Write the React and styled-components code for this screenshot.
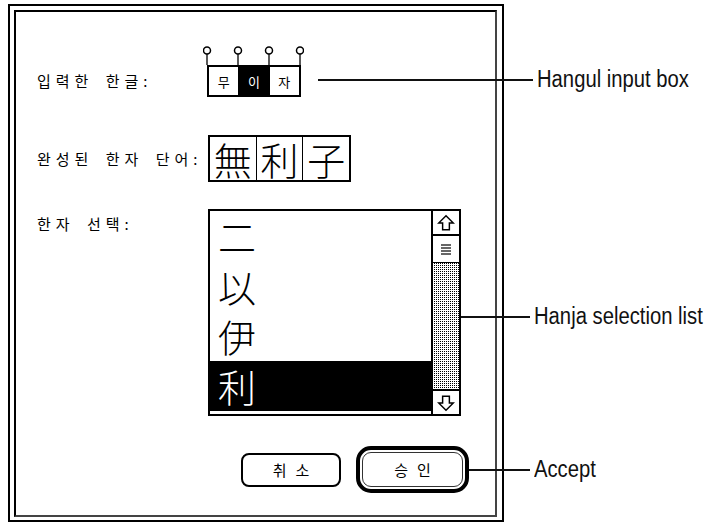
import styled, { createGlobalStyle } from 'styled-components';

const GlobalStyle = createGlobalStyle`
  body {
    margin: 0;
    background: #fff;
    font-family: "Noto Sans CJK KR", "Noto Sans", sans-serif;
    color: #000;
  }
`;

const Page = styled.div`
  width: 713px;
  height: 523px;
  padding: 4px 0 0 8px;
  box-sizing: border-box;
`;

const DialogOuter = styled.div`
  width: 496px;
  height: 518px;
  box-sizing: border-box;
  border: 2px solid #000;
  padding: 4px 5px 3px 4px;
`;

const DialogInner = styled.div`
  height: 100%;
  box-sizing: border-box;
  border: 2px solid #000;
  border-right-color: #444;
  border-bottom-color: #444;
  padding: 34px 0 0 21px;
  display: flex;
  flex-direction: column;
`;

const Row = styled.div`
  display: flex;
  align-items: ${(p) => p.$align || 'center'};
  margin-top: ${(p) => p.$top || 0}px;
`;

const Label = styled.div`
  width: 171px;
  flex: none;
  font-size: 15px;
  letter-spacing: 5px;
  word-spacing: 4px;
  white-space: nowrap;
  align-self: ${(p) => p.$self || 'auto'};
  padding-top: ${(p) => p.$pad || 0}px;
  padding-bottom: ${(p) => p.$padBottom || 0}px;
`;

const HangulBlock = styled.div`
  display: flex;
  flex-direction: column;
  margin-left: -1px;
`;

const Pins = styled.svg`
  display: block;
  margin-left: -4px;
`;

const CellRow = styled.div`
  display: flex;
  border: 2px solid #000;
  box-sizing: border-box;
  width: ${(p) => p.$w}px;
  height: ${(p) => p.$h}px;
`;

const Cell = styled.div`
  flex: 1;
  display: flex;
  align-items: center;
  justify-content: center;
  font-size: ${(p) => p.$size}px;
  line-height: 1;
  background: ${(p) => (p.$on ? '#000' : '#fff')};
  color: ${(p) => (p.$on ? '#fff' : '#000')};
  font-weight: ${(p) => p.$weight || 400};
  & + & {
    border-left: 1.5px solid #000;
  }
`;

const Callout = styled.div`
  display: flex;
  align-items: center;
  flex: none;
  margin-left: ${(p) => p.$gap || 0}px;
  margin-top: ${(p) => p.$mt || 0}px;
  margin-bottom: ${(p) => p.$mb || 0}px;
`;

const Leader = styled.div`
  width: ${(p) => p.$len}px;
  height: 2px;
  background: #111;
`;

const CalloutText = styled.span`
  display: inline-block;
  margin-left: 4px;
  font-family: "Liberation Sans Narrow", "Liberation Sans", Arial, sans-serif;
  font-size: 23px;
  white-space: nowrap;
  color: #111;
  transform: scaleX(0.88);
  transform-origin: left center;
`;

const List = styled.div`
  width: 253px;
  height: 207px;
  box-sizing: border-box;
  border: 2px solid #000;
  display: flex;
  flex: none;
`;

const Items = styled.div`
  flex: 1;
  display: flex;
  flex-direction: column;
`;

const Item = styled.div`
  height: 50px;
  padding-left: 8px;
  font-size: 38px;
  line-height: 50px;
  font-weight: 300;
  background: ${(p) => (p.$selected ? '#000' : '#fff')};
  color: ${(p) => (p.$selected ? '#fff' : '#000')};
`;

const ScrollBar = styled.div`
  width: 26px;
  flex: none;
  border-left: 2px solid #000;
  display: flex;
  flex-direction: column;
`;

const ArrowBox = styled.div`
  height: 23px;
  flex: none;
  display: flex;
  align-items: center;
  justify-content: center;
  background: #fff;
  border-top: ${(p) => (p.$top ? '2px solid #000' : 'none')};
  border-bottom: ${(p) => (p.$bottom ? '2px solid #000' : 'none')};
`;

const Thumb = styled.div`
  height: 26px;
  flex: none;
  background: #fff;
  border-bottom: 1px solid #000;
  display: flex;
  align-items: center;
  justify-content: center;
`;

const Track = styled.div`
  flex: 1;
  background: conic-gradient(#000 25%, #fff 0) 0 0 / 2px 2px;
`;

const ButtonRow = styled.div`
  display: flex;
  align-items: center;
  margin-left: 204px;
`;

const Button = styled.button`
  width: ${(p) => p.$w}px;
  height: ${(p) => p.$h}px;
  box-sizing: border-box;
  border: ${(p) => p.$border}px solid ${(p) => p.$color || '#000'};
  border-radius: ${(p) => p.$radius}px;
  background: #fff;
  font-family: "Noto Sans CJK KR", sans-serif;
  font-size: 15px;
  letter-spacing: 9px;
  padding: 0 0 0 9px;
  color: #000;
  cursor: pointer;
`;

const DefaultRing = styled.div`
  width: 113px;
  height: 47px;
  box-sizing: border-box;
  border: 4px solid #000;
  border-radius: 15px;
  padding: 2px;
  margin-left: 15px;
  display: flex;
`;

function UpArrow({ down }) {
  return (
    <svg width="18" height="18" viewBox="0 0 16 16" style={down ? { transform: 'rotate(180deg)' } : undefined}>
      <path d="M8 1.5 L14.5 8 H11 V14 H5 V8 H1.5 Z" fill="#fff" stroke="#000" strokeWidth="1.3" strokeLinejoin="miter" />
    </svg>
  );
}

function Grip() {
  return (
    <svg width="10" height="11" viewBox="0 0 10 11">
      {[1, 4, 7, 10].map((y) => (
        <line key={y} x1="0" x2="10" y1={y} y2={y} stroke="#000" strokeWidth="1.2" />
      ))}
    </svg>
  );
}

const hanja = ['二', '以', '伊', '利'];

export default function App() {
  return (
    <>
      <GlobalStyle />
      <Page>
        <DialogOuter>
          <DialogInner>
            <Row $align="flex-end">
              <Label $padBottom={6}>입력한 한글:</Label>
              <HangulBlock>
                <Pins width="101" height="19" viewBox="0 0 101 19">
                  {[4, 35, 66, 97].map((x) => (
                    <g key={x}>
                      <line x1={x} x2={x} y1="8" y2="19" stroke="#000" strokeWidth="1.3" />
                      <circle cx={x} cy="4.5" r="3.5" fill="#fff" stroke="#000" strokeWidth="1.5" />
                    </g>
                  ))}
                </Pins>
                <CellRow $w={94} $h={32}>
                  <Cell $size={13}>무</Cell>
                  <Cell $size={13} $on>이</Cell>
                  <Cell $size={13}>자</Cell>
                </CellRow>
              </HangulBlock>
              <Callout $gap={14} $mb={4}>
                <Leader $len={215} />
                <CalloutText>Hangul input box</CalloutText>
              </Callout>
            </Row>

            <Row $top={38}>
              <Label>완성된 한자 단어:</Label>
              <CellRow $w={143} $h={47}>
                <Cell $size={38} $weight={300}>無</Cell>
                <Cell $size={38} $weight={300}>利</Cell>
                <Cell $size={38} $weight={300}>子</Cell>
              </CellRow>
            </Row>

            <Row $top={27}>
              <Label $self="flex-start" $pad={4}>한자 선택:</Label>
              <List>
                <Items>
                  {hanja.map((h, i) => (
                    <Item key={h} $selected={i === 3}>{h}</Item>
                  ))}
                </Items>
                <ScrollBar>
                  <ArrowBox $bottom>
                    <UpArrow />
                  </ArrowBox>
                  <Thumb>
                    <Grip />
                  </Thumb>
                  <Track />
                  <ArrowBox $top>
                    <UpArrow down />
                  </ArrowBox>
                </ScrollBar>
              </List>
              <Callout $mt={8}>
                <Leader $len={69} />
                <CalloutText>Hanja selection list</CalloutText>
              </Callout>
            </Row>

            <Row $top={30}>
              <ButtonRow>
                <Button $w={100} $h={34} $border={2} $radius={8}>취소</Button>
                <DefaultRing>
                  <Button $w={101} $h={35} $border={1.5} $radius={9} $color="#333">승인</Button>
                </DefaultRing>
                <Callout>
                  <Leader $len={61} />
                  <CalloutText>Accept</CalloutText>
                </Callout>
              </ButtonRow>
            </Row>
          </DialogInner>
        </DialogOuter>
      </Page>
    </>
  );
}
